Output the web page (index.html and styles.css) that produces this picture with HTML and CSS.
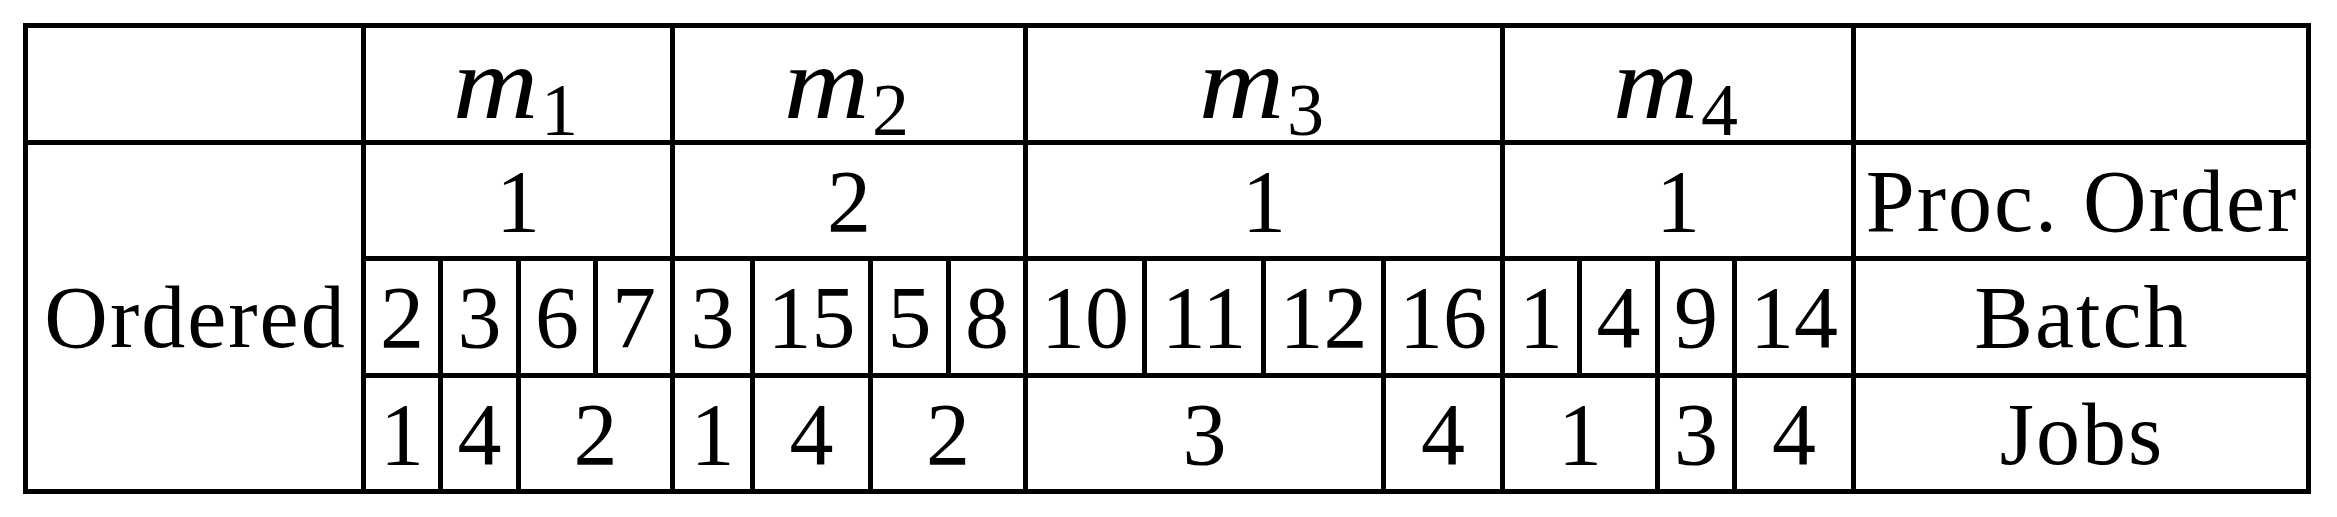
FILE: index.html
```html
<!DOCTYPE html>
<html>
<head>
<meta charset="utf-8">
<link rel="stylesheet" href="styles.css">
</head>
<body>
<div class="page">
  <div class="grid">
    <div class="cell"></div>
    <div class="cell head c4"><i class="var">m</i><span class="sub">1</span></div>
    <div class="cell head c4"><i class="var">m</i><span class="sub">2</span></div>
    <div class="cell head c4"><i class="var">m</i><span class="sub">3</span></div>
    <div class="cell head c4"><i class="var">m</i><span class="sub">4</span></div>
    <div class="cell"></div>

    <div class="cell r3 big word">Ordered</div>
    <div class="cell c4">1</div>
    <div class="cell c4">2</div>
    <div class="cell c4">1</div>
    <div class="cell c4">1</div>
    <div class="cell word">Proc. Order</div>

    <div class="cell">2</div>
    <div class="cell">3</div>
    <div class="cell">6</div>
    <div class="cell">7</div>
    <div class="cell">3</div>
    <div class="cell">15</div>
    <div class="cell">5</div>
    <div class="cell">8</div>
    <div class="cell">10</div>
    <div class="cell">11</div>
    <div class="cell">12</div>
    <div class="cell">16</div>
    <div class="cell">1</div>
    <div class="cell">4</div>
    <div class="cell">9</div>
    <div class="cell">14</div>
    <div class="cell word">Batch</div>

    <div class="cell">1</div>
    <div class="cell">4</div>
    <div class="cell c2">2</div>
    <div class="cell">1</div>
    <div class="cell">4</div>
    <div class="cell c2">2</div>
    <div class="cell c3">3</div>
    <div class="cell">4</div>
    <div class="cell c2">1</div>
    <div class="cell">3</div>
    <div class="cell">4</div>
    <div class="cell word">Jobs</div>
  </div>
</div>
</body>
</html>
```

FILE: styles.css
```css
html, body {
  margin: 0;
  padding: 0;
  background: #ffffff;
}

.page {
  padding: 23px 0 0 23px;
}

.grid {
  display: inline-grid;
  grid-template-columns: 333px 72px 73px 72px 72px 75px 113px 73px 72px 114px 114px 115px 114px 72px 73px 72px 114px 450px;
  grid-template-rows: 112px 111px 112px 111px;
  gap: 5px;
  padding: 5px;
  background: #000000;
}

.cell {
  background: #ffffff;
  color: #000000;
  font-family: "Liberation Serif", "Times New Roman", serif;
  font-size: 88px;
  line-height: 88px;
  padding-top: 13px;
  box-sizing: border-box;
  text-align: center;
  white-space: nowrap;
  overflow: visible;
}

.c2 { grid-column: span 2; }
.c3 { grid-column: span 3; }
.c4 { grid-column: span 4; }
.r3 { grid-row: span 3; }

.word {
  letter-spacing: 2px;
  text-indent: 2px;
}

.big {
  padding-top: 129px;
}

.head {
  padding-top: 3px;
  font-size: 104px;
  line-height: 104px;
}

.var {
  display: inline-block;
  font-style: italic;
  transform: scaleX(1.14);
  margin-right: 6px;
}

.sub {
  font-size: 74px;
  line-height: 0;
  vertical-align: -17px;
  margin-left: 2px;
}
```
